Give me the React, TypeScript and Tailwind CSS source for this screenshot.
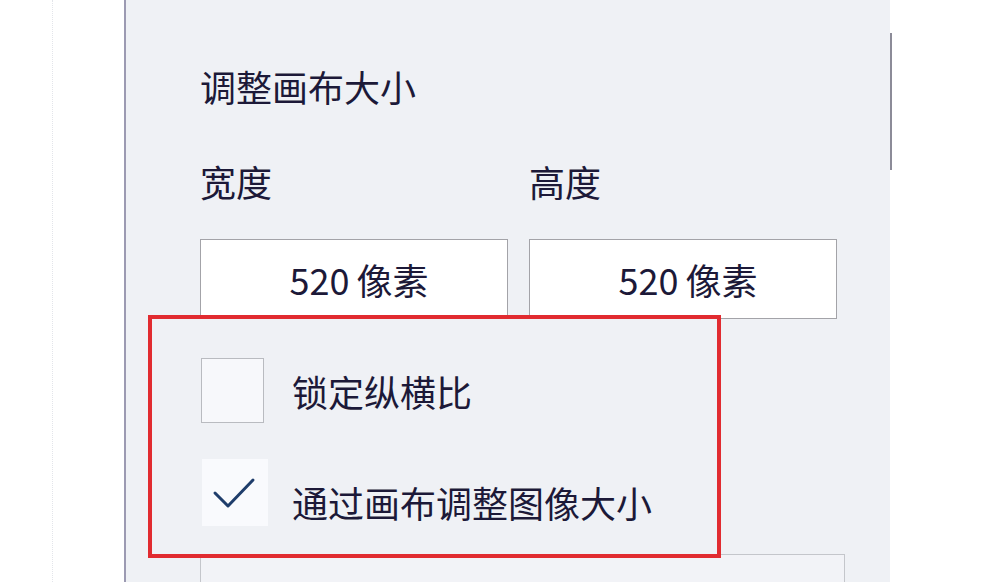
const font = { fontFamily: '"Noto Sans CJK SC", "Noto Sans", sans-serif' };

function SizeField({ label, value, unit }: { label: string; value: string; unit: string }) {
  return (
    <div className="flex flex-col">
      <div className="h-[36px] text-[36px] leading-[36px]">{label}</div>
      <div className="mt-[40px] flex h-[80px] w-[308px] items-center justify-center border-[1.5px] border-[#a3a3a8] bg-white pl-[10px] text-[36px] leading-[36px]">
        {value}
        <span className="ml-[7px]">{unit}</span>
      </div>
    </div>
  );
}

export default function App() {
  return (
    <div className="flex h-[582px] w-[1002px] overflow-hidden bg-white text-[#1c1938]" style={font}>
      {/* left white strip */}
      <div className="flex w-[124px] shrink-0">
        <div className="ml-[52px] h-full border-l border-dotted border-[#e3e5ea]" />
      </div>

      {/* panel */}
      <div className="flex w-[766px] shrink-0 flex-col border-l-2 border-[#9c9ab2] bg-[#eff1f5]">
        <div className="h-[2px] w-[717px] bg-[#d6dbe0]" />
        <div className="flex flex-col pl-[74px]">
          <div className="mt-[68px] h-[36px] text-[36px] leading-[36px]">调整画布大小</div>

          <div className="mt-[59px] flex gap-[21px]">
            <SizeField label="宽度" value="520" unit="像素" />
            <SizeField label="高度" value="520" unit="像素" />
          </div>

          {/* highlighted options */}
          <div className="relative z-10 -ml-[52px] -mt-[4px] h-[243px] w-[573px] border-4 border-[#e12b30]">
            <div className="ml-[49px] mt-[39px] flex items-center">
              <div className="h-[65px] w-[63px] border-[1.5px] border-[#b9bbc0] bg-[#f7f8fb]" />
              <div className="ml-[28px] text-[36px] leading-[36px]">锁定纵横比</div>
            </div>
            <div className="ml-[50px] mt-[36px] flex items-center">
              <div className="flex h-[67px] w-[66px] items-center justify-center bg-[#f9fafd]">
                <svg width="66" height="67" viewBox="0 0 66 67" fill="none">
                  <path
                    d="M13 34 L26 47 L51 21"
                    stroke="#1f3d6b"
                    strokeWidth="3"
                    strokeLinecap="round"
                    strokeLinejoin="round"
                  />
                </svg>
              </div>
              <div className="ml-[24px] mt-[18px] text-[36px] leading-[36px]">通过画布调整图像大小</div>
            </div>
          </div>

          <div className="-mt-[4px] h-[60px] w-[645px] border-[1.5px] border-[#c4c6cb] bg-[#f2f3f7]" />
        </div>
      </div>

      {/* right white area with scroll thumb */}
      <div className="flex flex-1 flex-col">
        <div className="mt-[33px] h-[137px] w-[2px] bg-[#8c8b98]" />
      </div>
    </div>
  );
}
